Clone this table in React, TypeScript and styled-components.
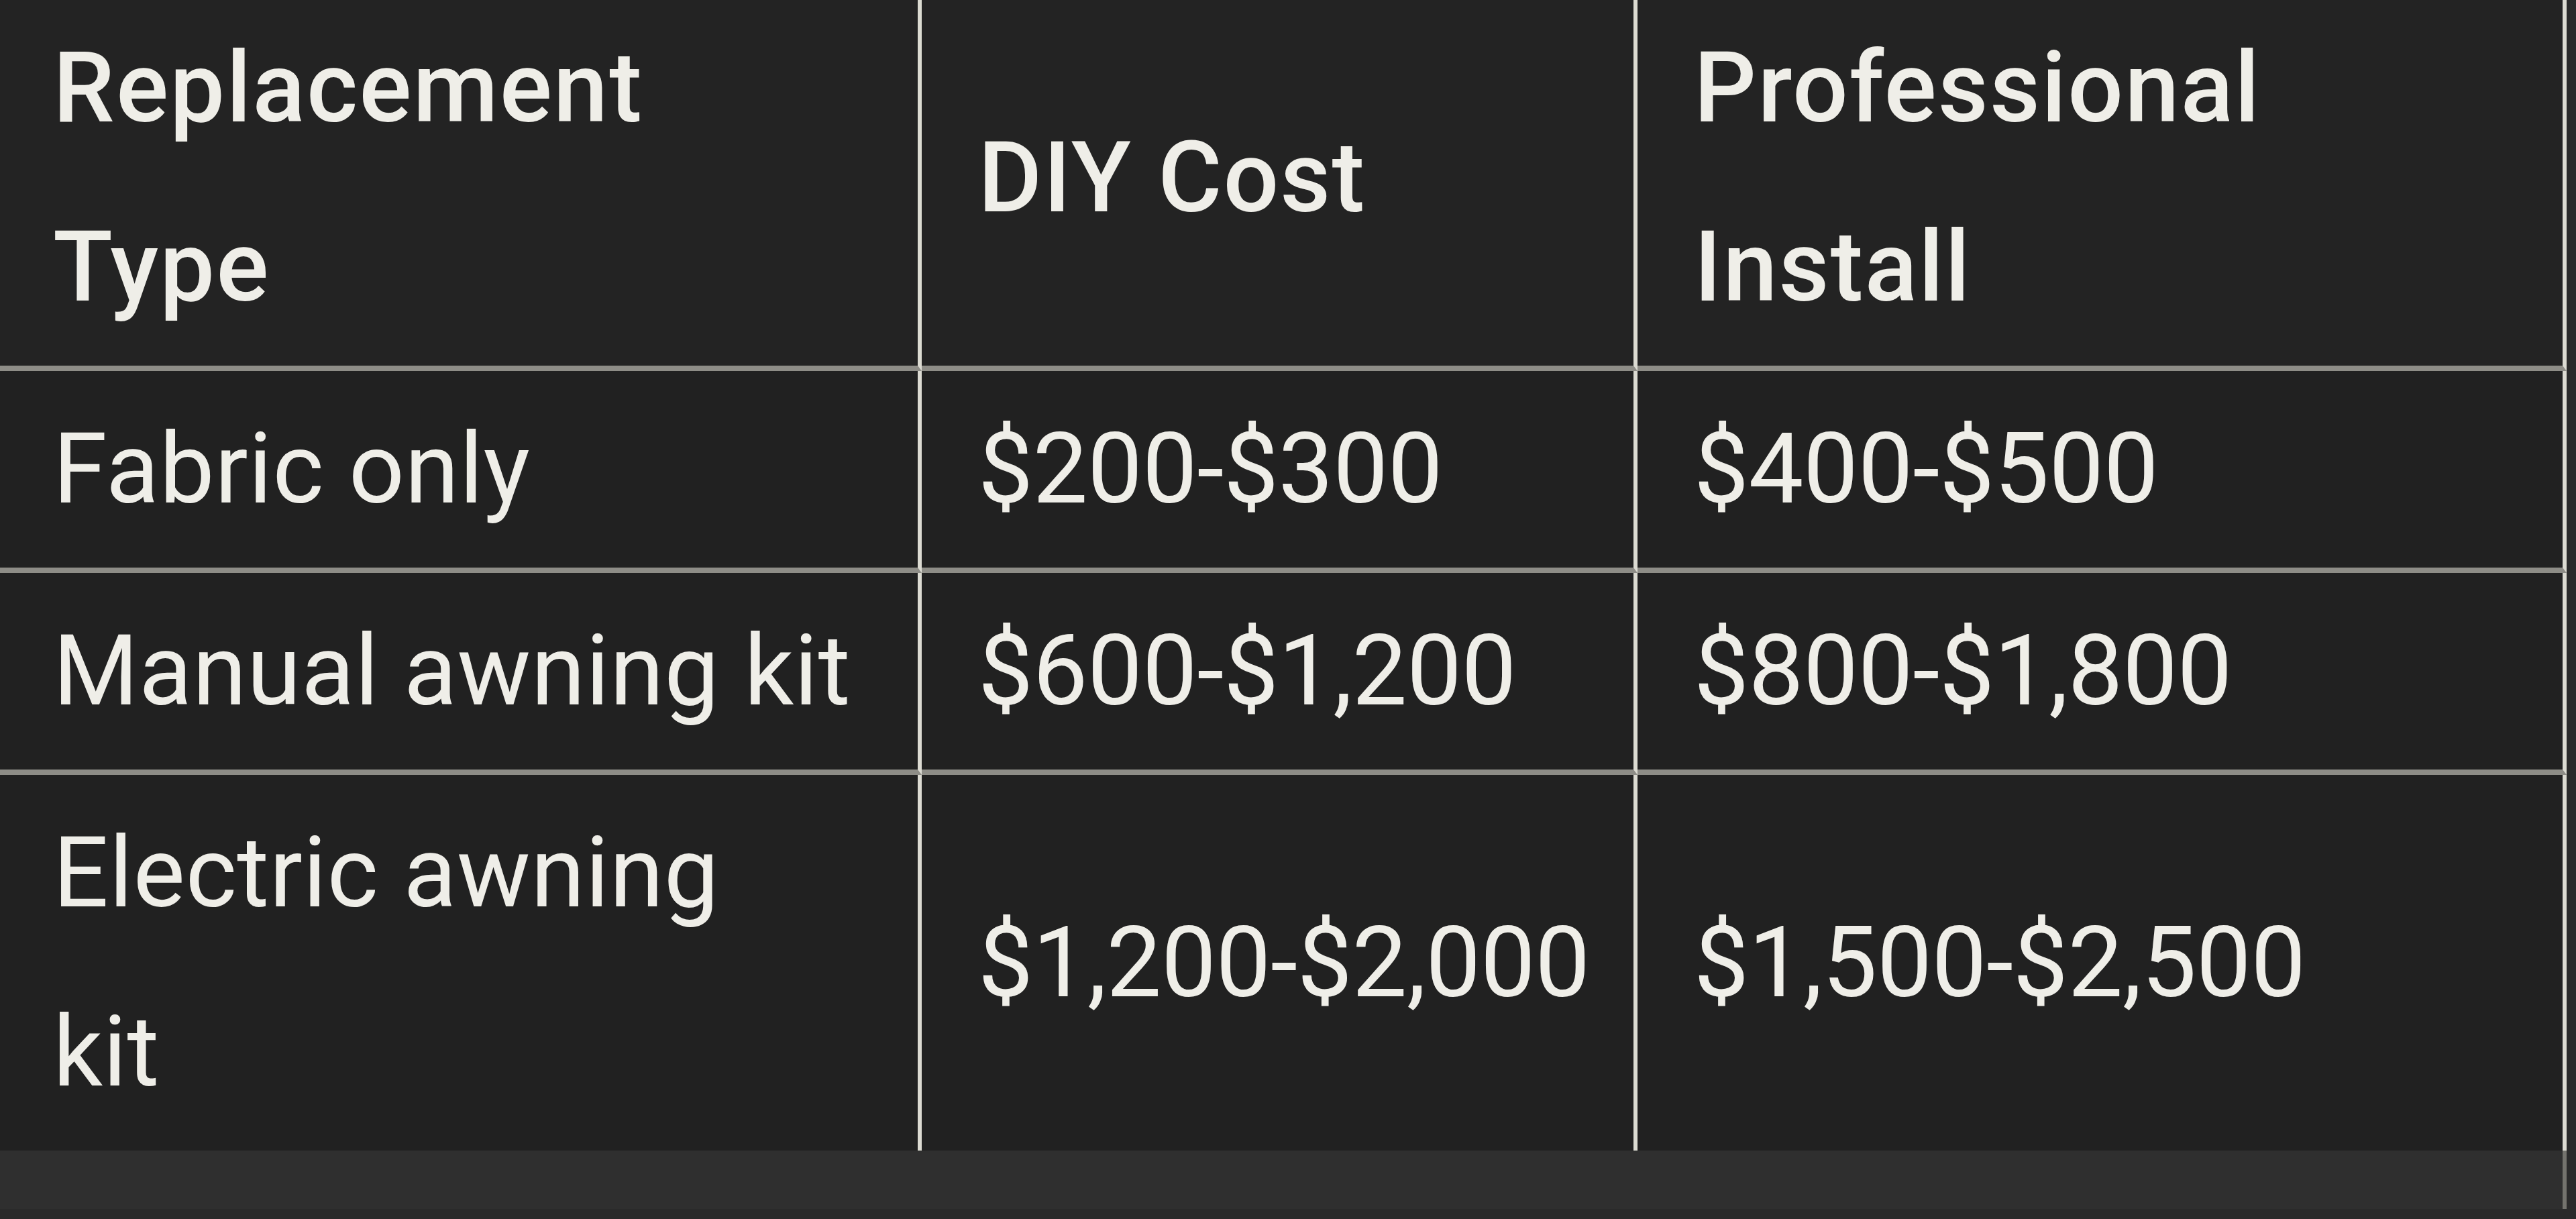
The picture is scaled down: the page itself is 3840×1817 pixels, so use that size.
import React from "react";
import styled, { createGlobalStyle } from "styled-components";

const GlobalStyle = createGlobalStyle`
  html, body {
    margin: 0;
    padding: 0;
    background: #2a2a2a;
    overflow: hidden;
  }
  #root {
    height: 100vh;
  }
`;

const Frame = styled.div`
  display: flex;
  flex-direction: column;
  width: 3831px;
  height: calc(100vh + 15px);
  margin-left: -5px;
  margin-top: -15px;
  background: #2f2f2f;
`;

const Table = styled.table`
  width: 3831px;
  table-layout: fixed;
  border-collapse: separate;
  border-spacing: 0;
  font-family: Roboto, "Liberation Sans", sans-serif;
  font-size: 146px;
  line-height: 267px;
  color: #efeee8;
  flex: none;
`;

const Col = styled.col<{ $w: number }>`
  width: ${(p) => p.$w}px;
`;

const HeadRow = styled.tr`
  background: #232323;
`;

const BodyRow = styled.tr`
  background: #212121;
`;

const HeadCell = styled.th`
  text-align: left;
  vertical-align: middle;
  font-weight: 500;
  letter-spacing: 2px;
  padding: 13px 40px 13px 84px;
  border-right: 6px solid #dcdbd2;
  border-bottom: 8px solid #8e8d87;
`;

const Cell = styled.td<{ $last?: boolean; $num?: boolean }>`
  vertical-align: middle;
  font-weight: 400;
  white-space: nowrap;
  letter-spacing: ${(p) => (p.$num ? "-0.5px" : "0.5px")};
  padding: 13px 40px 13px 84px;
  border-right: 6px solid #dcdbd2;
  border-bottom: ${(p) => (p.$last ? "none" : "8px solid #8e8d87")};
`;

const Strip = styled.div`
  flex: 1;
  background: #2f2f2f;
  border-right: 6px solid #74736d;
`;

type Row = { type: React.ReactNode; diy: string; pro: string };

const rows: Row[] = [
  { type: "Fabric only", diy: "$200-$300", pro: "$400-$500" },
  { type: "Manual awning kit", diy: "$600-$1,200", pro: "$800-$1,800" },
  {
    type: (
      <>
        Electric awning
        <br />
        kit
      </>
    ),
    diy: "$1,200-$2,000",
    pro: "$1,500-$2,500",
  },
];

export default function App() {
  return (
    <>
      <GlobalStyle />
      <Frame>
        <Table>
          <colgroup>
            <Col $w={1379} />
            <Col $w={1067} />
            <Col $w={1385} />
          </colgroup>
          <thead>
            <HeadRow>
              <HeadCell>
                Replacement
                <br />
                Type
              </HeadCell>
              <HeadCell>DIY Cost</HeadCell>
              <HeadCell>
                Professional
                <br />
                Install
              </HeadCell>
            </HeadRow>
          </thead>
          <tbody>
            {rows.map((r, i) => {
              const last = i === rows.length - 1;
              return (
                <BodyRow key={i}>
                  <Cell $last={last}>{r.type}</Cell>
                  <Cell $last={last} $num>
                    {r.diy}
                  </Cell>
                  <Cell $last={last} $num>
                    {r.pro}
                  </Cell>
                </BodyRow>
              );
            })}
          </tbody>
        </Table>
        <Strip />
      </Frame>
    </>
  );
}
